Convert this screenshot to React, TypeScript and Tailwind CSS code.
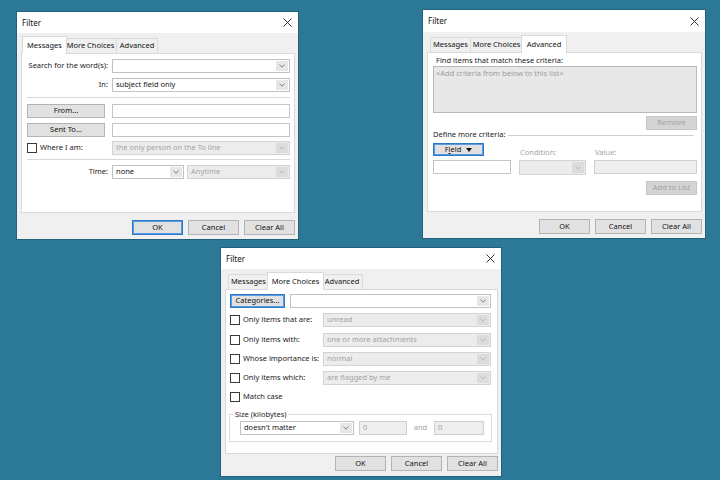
import React from "react";

type Tab = "Messages" | "More Choices" | "Advanced";

const tabs: Tab[] = ["Messages", "More Choices", "Advanced"];

const tabWidth: Record<Tab, [string, string]> = {
  Messages: ["w-[41px]", "w-[45px]"],
  "More Choices": ["w-[53px]", "w-[57px]"],
  Advanced: ["w-[42px]", "w-[46px]"],
};

function Chevron({ color = "#6f6f6f" }: { color?: string }) {
  return (
    <svg width="6" height="4" viewBox="0 0 6 4">
      <polyline points="0.5,0.5 3,3.2 5.5,0.5" fill="none" stroke={color} strokeWidth="0.9" />
    </svg>
  );
}

function CloseX() {
  return (
    <svg width="9" height="9" viewBox="0 0 9 9">
      <path d="M0.5 0.5 L8.5 8.5 M8.5 0.5 L0.5 8.5" stroke="#1f1f1f" strokeWidth="0.9" />
    </svg>
  );
}

function Btn({
  label,
  className = "",
  disabled = false,
  focus = false,
}: {
  label: React.ReactNode;
  className?: string;
  disabled?: boolean;
  focus?: boolean;
}) {
  const look = disabled
    ? "bg-[#d4d4d4] border-[#c6c6c6] text-[#a2a2a2]"
    : focus
    ? "bg-[#e1e1e1] border-[#2a78c9] text-[#111] shadow-[inset_0_0_0_1px_#5b9be0]"
    : "bg-[#e1e1e1] border-[#b4b4b4] text-[#111]";
  return (
    <div className={`flex items-center justify-center border leading-none ${look} ${className}`}>
      {label}
    </div>
  );
}

function Combo({
  text = "",
  disabled = false,
  className = "",
}: {
  text?: string;
  disabled?: boolean;
  className?: string;
}) {
  const look = disabled
    ? "bg-[#ececec] border-[#d3d3d3] text-[#a3a3a3]"
    : "bg-white border-[#c1c1c1] text-[#151515]";
  return (
    <div className={`flex items-stretch border ${look} ${className}`}>
      <span className="flex flex-1 items-center overflow-hidden whitespace-nowrap pl-[3px] leading-none">
        {text}
      </span>
      <span
        className={`m-px flex w-[12px] items-center justify-center ${
          disabled ? "bg-[#dcdcdc]" : "bg-[#e6e6e6]"
        }`}
      >
        <Chevron color={disabled ? "#b5b5b5" : "#7a7a7a"} />
      </span>
    </div>
  );
}

function Field({
  text = "",
  disabled = false,
  className = "",
}: {
  text?: string;
  disabled?: boolean;
  className?: string;
}) {
  const look = disabled
    ? "bg-[#eeeeee] border-[#cfcfcf] text-[#a3a3a3]"
    : "bg-white border-[#c4c4c4] text-[#151515]";
  return (
    <div className={`flex items-center border pl-[3px] leading-none ${look} ${className}`}>
      {text}
    </div>
  );
}

function Check({ label }: { label: string }) {
  return (
    <div className="flex items-center">
      <span className="h-[10px] w-[10px] border border-[#3a3a3a] bg-white" />
      <span className="ml-[3px] leading-none text-[#1b1b1b]">{label}</span>
    </div>
  );
}

function Window({
  pos,
  titleH,
  active,
  panelH,
  footerMt,
  okFocus = false,
  children,
}: {
  pos: string;
  titleH: string;
  active: Tab;
  panelH: string;
  footerMt: string;
  okFocus?: boolean;
  children: React.ReactNode;
}) {
  return (
    <div className={`absolute flex flex-col border border-[#22607b] bg-[#f0f0f0] ${pos}`}>
      <div className={`flex items-center justify-between bg-white pl-[5px] pr-[6px] ${titleH}`}>
        <span className="text-[8px] leading-none text-[#111]">Filter</span>
        <CloseX />
      </div>
      <div className="flex flex-col pl-[4px] pr-[3px] pt-[3px]">
        <div className="flex h-[17px] items-end pl-[3px]">
          {tabs.map((t, i) => {
            const sel = t === active;
            return (
              <div
                key={t}
                className={`flex items-center justify-center border border-b-0 border-[#d9d9d9] leading-none text-[#111] ${
                  sel
                    ? `relative z-10 -mx-[2px] mb-[-1px] h-[18px] bg-white ${tabWidth[t][1]}`
                    : `h-[15px] bg-[#f0f0f0] ${tabWidth[t][0]}`
                } ${i > 0 && !sel ? "-ml-px" : ""}`}
              >
                {t}
              </div>
            );
          })}
        </div>
        <div className={`flex flex-col border border-[#d9d9d9] bg-white ${panelH}`}>{children}</div>
        <div className={`flex justify-end gap-[5px] ${footerMt}`}>
          <Btn label="OK" focus={okFocus} className="h-[15px] w-[51px]" />
          <Btn label="Cancel" className="h-[15px] w-[51px]" />
          <Btn label="Clear All" className="h-[15px] w-[51px]" />
        </div>
      </div>
    </div>
  );
}

function MessagesPanel() {
  return (
    <div className="flex flex-col pl-[5px] pr-[4px] pt-[5px] text-[#1b1b1b]">
      <div className="flex h-[14px] items-center">
        <span className="w-[81px] text-right leading-none">Search for the word(s):</span>
        <Combo className="ml-[4px] h-full flex-1" />
      </div>
      <div className="mt-[5px] flex h-[14px] items-center">
        <span className="w-[81px] text-right leading-none">In:</span>
        <Combo text="subject field only" className="ml-[4px] h-full flex-1" />
      </div>
      <div className="mt-[5px] h-px bg-[#d8d8d8]" />
      <div className="mt-[6px] flex h-[14px] items-center">
        <Btn label="From..." className="h-full w-[78px]" />
        <Field className="ml-[7px] h-full flex-1" />
      </div>
      <div className="mt-[5px] flex h-[14px] items-center">
        <Btn label="Sent To..." className="h-full w-[78px]" />
        <Field className="ml-[7px] h-full flex-1" />
      </div>
      <div className="mt-[4px] flex h-[14px] items-center">
        <div className="w-[85px]">
          <Check label="Where I am:" />
        </div>
        <Combo text="the only person on the To line" disabled className="h-full flex-1" />
      </div>
      <div className="mt-[4px] h-px bg-[#d8d8d8]" />
      <div className="mt-[5px] flex h-[14px] items-center">
        <span className="w-[81px] text-right leading-none">Time:</span>
        <Combo text="none" className="ml-[4px] h-full w-[72px]" />
        <Combo text="Anytime" disabled className="ml-[3px] h-full flex-1" />
      </div>
    </div>
  );
}

function AdvancedPanel() {
  return (
    <div className="flex flex-col pl-[5px] pr-[4px] pt-[2px] text-[#1b1b1b]">
      <div className="flex h-[11px] items-center pl-[3px] leading-none">Find items that match these criteria:</div>
      <div className="h-[47px] border border-[#b9b9b9] bg-[#e8e8e8] px-[2px] pt-[3px] leading-none text-[#9c9c9c]">
        &lt;Add criteria from below to this list&gt;
      </div>
      <Btn label="Remove" disabled className="mt-[3px] h-[14px] w-[51px] self-end" />
      <div className="flex h-[10px] items-center">
        <span className="leading-none">Define more criteria:</span>
        <span className="ml-[2px] mr-[3px] h-px flex-1 bg-[#cfcfcf]" />
      </div>
      <div className="mt-[3px] grid grid-cols-[78px_67px_1fr] gap-x-[8px] gap-y-[4px]">
        <Btn
          label={
            <span className="flex items-center gap-[5px]">
              <span>
                F<span className="underline">i</span>eld
              </span>
              <svg width="6" height="4" viewBox="0 0 6 4">
                <polygon points="0,0 6,0 3,4" fill="#111" />
              </svg>
            </span>
          }
          focus
          className="h-[13px] w-[51px]"
        />
        <span className="self-end pl-[1px] leading-none text-[#a3a3a3]">Condition:</span>
        <span className="self-end pl-[1px] leading-none text-[#a3a3a3]">Value:</span>
        <Field className="h-[14px]" />
        <Combo disabled className="h-[15px]" />
        <Field disabled className="h-[14px]" />
      </div>
      <Btn label="Add to List" disabled className="mt-[6px] h-[14px] w-[51px] self-end" />
    </div>
  );
}

function MoreChoicesPanel() {
  const rows: { label: string; value: string; mt: string }[] = [
    { label: "Only items that are:", value: "unread", mt: "mt-[5px]" },
    { label: "Only items with:", value: "one or more attachments", mt: "mt-[6px]" },
    { label: "Whose importance is:", value: "normal", mt: "mt-[5px]" },
    { label: "Only items which:", value: "are flagged by me", mt: "mt-[5px]" },
  ];
  return (
    <div className="flex flex-col pl-[4px] pr-[6px] pt-[4px] text-[#1b1b1b]">
      <div className="flex h-[14px] items-center">
        <Btn label="Categories..." focus className="h-[14px] w-[55px]" />
        <Combo className="ml-[5px] h-full flex-1" />
      </div>
      {rows.map((r) => (
        <div key={r.label} className={`flex h-[14px] items-center ${r.mt}`}>
          <div className="w-[93px]">
            <Check label={r.label} />
          </div>
          <Combo text={r.value} disabled className="h-full flex-1" />
        </div>
      ))}
      <div className="mt-[7px] flex h-[10px] items-center">
        <Check label="Match case" />
      </div>
      <fieldset className="-mx-px mt-[7px] border border-[#dcdcdc] pb-[6px] pl-[10px]">
        <legend className="-ml-[6px] px-[1px] leading-[10px] text-[#1b1b1b]">Size (kilobytes)</legend>
        <div className="mt-[2px] flex h-[14px] items-center">
          <Combo text="doesn't matter" className="h-full w-[114px]" />
          <Field text="0" disabled className="ml-[5px] h-full w-[48px]" />
          <span className="w-[27px] text-center leading-none text-[#a3a3a3]">and</span>
          <Field text="0" disabled className="h-full w-[50px]" />
        </div>
      </fieldset>
    </div>
  );
}

export default function App() {
  return (
    <div className="relative h-[480px] w-[720px] overflow-hidden bg-[#2c7997] font-['Noto_Sans',sans-serif] text-[7.5px]">
      <Window
        pos="left-[16px] top-[11px] h-[229px] w-[283px]"
        titleH="h-[21px]"
        active="Messages"
        panelH="h-[160px]"
        footerMt="mt-[7px]"
        okFocus
      >
        <MessagesPanel />
      </Window>
      <Window
        pos="left-[422px] top-[9px] h-[230px] w-[284px]"
        titleH="h-[22px]"
        active="Advanced"
        panelH="h-[160px]"
        footerMt="mt-[7px]"
      >
        <AdvancedPanel />
      </Window>
      <Window
        pos="left-[220px] top-[247px] h-[230px] w-[282px]"
        titleH="h-[21px]"
        active="More Choices"
        panelH="h-[165px]"
        footerMt="mt-[2px]"
      >
        <MoreChoicesPanel />
      </Window>
    </div>
  );
}
